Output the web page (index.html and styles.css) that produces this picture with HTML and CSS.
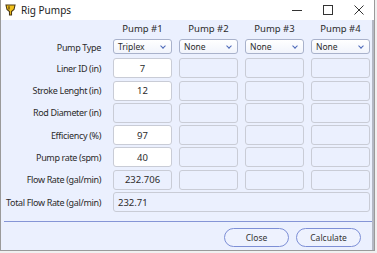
FILE: index.html
```html
<!DOCTYPE html>
<html lang="en">
<head>
    <meta charset="UTF-8">
    <title>Rig Pumps</title>
    <link rel="stylesheet" href="styles.css">
</head>
<body>
    <div class="window">
        <div class="titlebar">
            <svg class="app-icon" width="11" height="12" viewBox="0 0 11 12">
                <path d="M1 1 H10 L9 5.5 L6.5 7.5 V11 H4.5 V7.5 L2 5.5 Z" fill="#f3c21b" stroke="#4d3a12" stroke-width="1.1"/>
                <path d="M4 2.2 V5.5" stroke="#4d3a12" stroke-width="1.2"/>
            </svg>
            <span class="title">Rig Pumps</span>
            <div class="controls">
                <span class="ctl"><svg width="10" height="10"><path d="M0 5.5 H10" stroke="#333" stroke-width="1"/></svg></span>
                <span class="ctl"><svg width="10" height="10"><rect x="0.5" y="0.5" width="9" height="9" fill="none" stroke="#333"/></svg></span>
                <span class="ctl"><svg width="10" height="10"><path d="M0.5 0.5 L9.5 9.5 M9.5 0.5 L0.5 9.5" stroke="#333" stroke-width="1"/></svg></span>
            </div>
        </div>
        <div class="content">
            <div class="grid">
                <div></div>
                <div class="head">Pump #1</div>
                <div class="head">Pump #2</div>
                <div class="head">Pump #3</div>
                <div class="head">Pump #4</div>

                <div class="label">Pump Type</div>
                <div class="select">Triplex<span class="chev"></span></div>
                <div class="select">None<span class="chev"></span></div>
                <div class="select">None<span class="chev"></span></div>
                <div class="select">None<span class="chev"></span></div>

                <div class="label">Liner ID (in)</div>
                <div class="field on">7</div>
                <div class="field"></div>
                <div class="field"></div>
                <div class="field"></div>

                <div class="label">Stroke Lenght (in)</div>
                <div class="field on">12</div>
                <div class="field"></div>
                <div class="field"></div>
                <div class="field"></div>

                <div class="label">Rod Diameter (in)</div>
                <div class="field"></div>
                <div class="field"></div>
                <div class="field"></div>
                <div class="field"></div>

                <div class="label">Efficiency (%)</div>
                <div class="field on">97</div>
                <div class="field"></div>
                <div class="field"></div>
                <div class="field"></div>

                <div class="label">Pump rate (spm)</div>
                <div class="field on">40</div>
                <div class="field"></div>
                <div class="field"></div>
                <div class="field"></div>

                <div class="label">Flow Rate (gal/min)</div>
                <div class="field">232.706</div>
                <div class="field"></div>
                <div class="field"></div>
                <div class="field"></div>

                <div class="label">Total Flow Rate (gal/min)</div>
                <div class="field total">232.71</div>
            </div>
            <div class="separator"></div>
            <div class="buttons">
                <button class="btn">Close</button>
                <button class="btn">Calculate</button>
            </div>
        </div>
    </div>
</body>
</html>
```

FILE: styles.css
```css
* { box-sizing: border-box; margin: 0; padding: 0; }
body {
    font-family: 'Noto Sans', 'Open Sans', sans-serif;
    font-size: 9.5px;
    color: #2b2b2b;
    background: #f0f0f0;
}
.window {
    width: 375px;
    height: 251px;
    background: #fff;
    border: 1px solid #9a9a9a;
    border-top: none;
    display: flex;
    flex-direction: column;
}
.titlebar {
    height: 20px;
    display: flex;
    align-items: center;
    padding-left: 4px;
    background: #fff;
}
.app-icon { margin-right: 5px; }
.title { font-size: 10px; color: #222; }
.controls {
    margin-left: auto;
    display: flex;
    height: 20px;
}
.ctl {
    width: 31px;
    display: flex;
    align-items: center;
    justify-content: center;
}
.content {
    flex: 1;
    background: #ebf0fe;
    border-right: 2px solid #b4b8c4;
    display: flex;
    flex-direction: column;
}
.grid {
    display: grid;
    grid-template-columns: 105px repeat(4, 59px);
    column-gap: 7px;
    row-gap: 2.3px;
    padding-top: 2px;
}
.head {
    height: 14px;
    text-align: center;
    line-height: 14px;
    margin-bottom: 1px;
}
.label {
    white-space: nowrap;
    font-size: 9px;
    letter-spacing: -0.35px;
    padding-right: 5px;
    display: flex;
    align-items: center;
    justify-content: flex-end;
}
.select {
    height: 15px;
    margin-bottom: 1.7px;
    border: 1px solid #a9b2cb;
    border-radius: 3px;
    background: linear-gradient(#ffffff, #f1f4fc);
    font-size: 8.5px;
    padding-left: 4px;
    display: flex;
    align-items: center;
    position: relative;
}
.chev {
    position: absolute;
    right: 6px;
    top: 4px;
    width: 4px;
    height: 4px;
    border-right: 1.2px solid #4a67b8;
    border-bottom: 1.2px solid #4a67b8;
    transform: rotate(45deg);
}
.field {
    height: 20px;
    border: 1px solid #c9ccd6;
    border-radius: 3px;
    background: #ebf0fe;
    display: flex;
    align-items: center;
    justify-content: center;
}
.field.on { background: #fff; }
.field.total {
    grid-column: 2 / 6;
    justify-content: flex-start;
    padding-left: 4px;
}
.separator {
    height: 1px;
    background: #8595d6;
    margin: 9px 0 0 3px;
}
.buttons {
    display: flex;
    justify-content: flex-end;
    gap: 7px;
    padding: 6px 11px 0 0;
}
.btn {
    width: 65px;
    height: 19px;
    border: 1px solid #7d8fd6;
    border-radius: 10px;
    background: #eef2fe;
    font-family: inherit;
    font-size: 8.5px;
    color: #333;
}
```
